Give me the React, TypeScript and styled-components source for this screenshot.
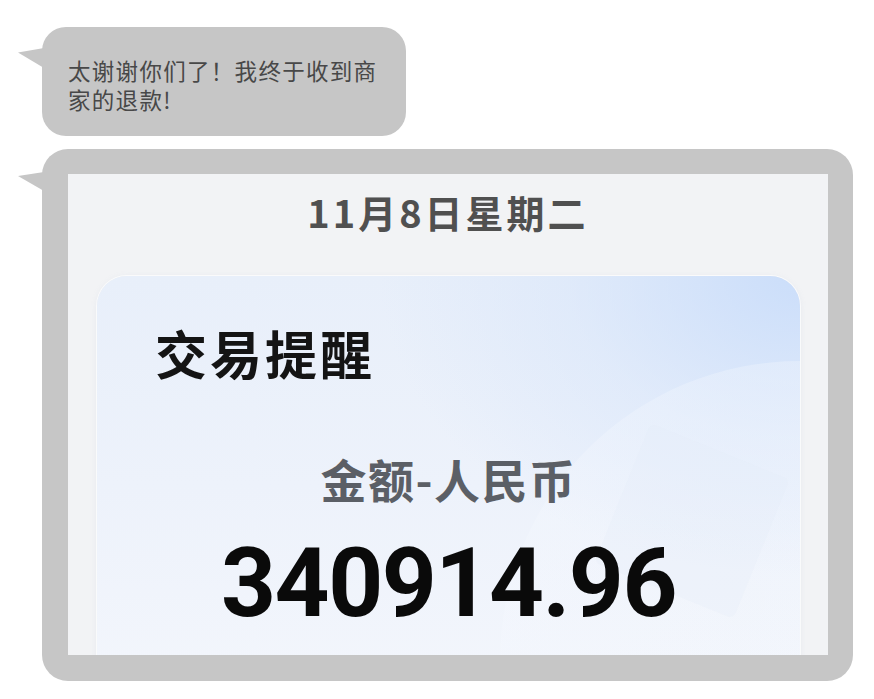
import styled, { createGlobalStyle } from "styled-components"

const GlobalStyle = createGlobalStyle`
    html, body {
        margin: 0;
        padding: 0;
        background: #ffffff;
    }
    body {
        font-family: "Noto Sans CJK SC", "Noto Sans", sans-serif;
    }
`

const App = () => {
    return (
        <>
            <GlobalStyle />
            <Page>
                <Bubble>
                    <BubbleText>太谢谢你们了！我终于收到商家的退款!</BubbleText>
                </Bubble>
                <ImageBubble>
                    <Shot>
                        <DateLine>11月8日星期二</DateLine>
                        <Card>
                            <CardTitle>交易提醒</CardTitle>
                            <AmountLabel>金额-人民币</AmountLabel>
                            <Amount>340914.96</Amount>
                        </Card>
                    </Shot>
                </ImageBubble>
            </Page>
        </>
    )
}

export default App

const Page = styled.div`
    display: flex;
    flex-direction: column;
    align-items: flex-start;
    gap: 13px;
    padding: 27px 0 0 42px;
    width: 874px;
    height: 699px;
    box-sizing: border-box;
    overflow: hidden;
`

const Bubble = styled.div`
    position: relative;
    width: 364px;
    box-sizing: border-box;
    padding: 29px 20px 22px 26px;
    background: #c6c6c6;
    border-radius: 24px;

    &::before {
        content: "";
        position: absolute;
        left: -24px;
        top: 21px;
        width: 26px;
        height: 20px;
        background: #c6c6c6;
        clip-path: polygon(100% 0, 0 22%, 100% 100%);
    }
`

const BubbleText = styled.p`
    margin: 0;
    font-size: 22.5px;
    line-height: 29px;
    letter-spacing: 1.3px;
    color: #484848;
`

const ImageBubble = styled.div`
    position: relative;
    width: 811px;
    height: 532px;
    box-sizing: border-box;
    padding: 25px 25px 26px 26px;
    background: #c6c6c6;
    border-radius: 26px;

    &::before {
        content: "";
        position: absolute;
        left: -24px;
        top: 23px;
        width: 26px;
        height: 19px;
        background: #c6c6c6;
        clip-path: polygon(100% 0, 0 21%, 100% 100%);
    }
`

const Shot = styled.div`
    height: 100%;
    background: #f2f3f5;
    overflow: hidden;
    display: flex;
    flex-direction: column;
    align-items: stretch;
`

const DateLine = styled.div`
    padding-top: 16px;
    text-align: center;
    font-size: 38px;
    line-height: 44px;
    font-weight: 700;
    letter-spacing: 3px;
    color: #505050;
`

const Card = styled.div`
    position: relative;
    margin: 42px 28px 0 29px;
    height: 420px;
    flex-shrink: 0;
    border-radius: 30px;
    overflow: hidden;
    display: flex;
    flex-direction: column;
    background:
        radial-gradient(ellipse 420px 300px at 100% 0%, rgba(200, 220, 250, 0.9) 0%, rgba(210, 226, 250, 0.4) 55%, rgba(230, 238, 250, 0) 100%),
        linear-gradient(180deg, #e8effa 0%, #edf2fb 50%, #f3f6fc 100%);
    box-shadow: 0 0 0 1px rgba(255, 255, 255, 0.7), 0 1px 6px rgba(160, 175, 200, 0.15);

    &::before {
        content: "";
        position: absolute;
        right: -300px;
        top: 85px;
        width: 600px;
        height: 600px;
        border-radius: 50%;
        background: radial-gradient(circle at 40% 40%, rgba(244, 248, 254, 0.15) 0%, rgba(246, 249, 254, 0.4) 70%);
    }

    &::after {
        content: "";
        position: absolute;
        left: 520px;
        top: 170px;
        width: 150px;
        height: 150px;
        transform: rotate(22deg);
        background: rgba(226, 234, 246, 0.25);
        border-radius: 6px;
    }
`

const CardTitle = styled.h1`
    position: relative;
    z-index: 1;
    margin: 47px 0 0 58px;
    font-size: 52px;
    line-height: 60px;
    font-weight: 700;
    letter-spacing: 3px;
    color: #141414;
`

const AmountLabel = styled.div`
    position: relative;
    z-index: 1;
    margin-top: 67px;
    text-align: center;
    font-size: 46px;
    line-height: 56px;
    font-weight: 700;
    letter-spacing: 1.5px;
    color: #5b5f66;
`

const Amount = styled.div`
    position: relative;
    z-index: 1;
    margin-top: 22px;
    text-align: center;
    font-family: Roboto, "Noto Sans", sans-serif;
    font-size: 96px;
    line-height: 110px;
    font-weight: 700;
    letter-spacing: -1.5px;
    color: #0a0a0a;
`
